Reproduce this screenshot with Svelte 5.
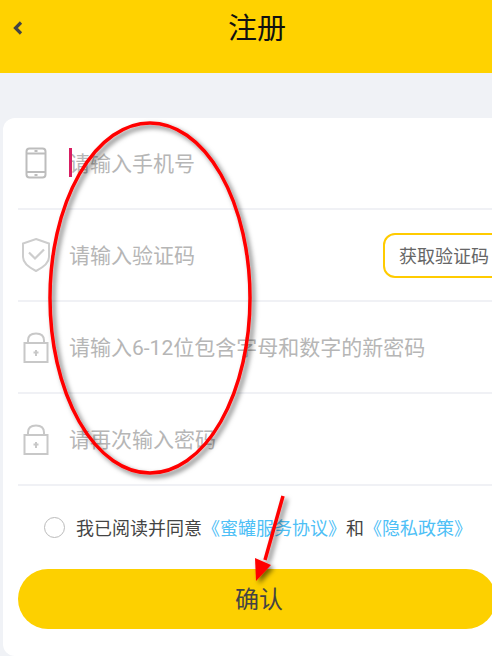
<script>
  const rows = [
    { icon: "phone", hint: "请输入手机号", caret: true },
    { icon: "shield", hint: "请输入验证码", code: true },
    { icon: "lock", hint: "请输入6-12位包含字母和数字的新密码" },
    { icon: "lock", hint: "请再次输入密码" },
  ];
</script>

<div class="page">
  <header class="bar">
    <svg class="back" width="12" height="16" viewBox="0 0 12 16">
      <path d="M9 2.5 L3.5 8 L9 13.5" fill="none" stroke="#444" stroke-width="3.2" />
    </svg>
    <h1>注册</h1>
  </header>

  <main class="card">
    {#each rows as row}
      <div class="row">
        <div class="icon">
          {#if row.icon == "phone"}
            <svg width="22" height="32" viewBox="0 0 22 32" fill="none" stroke="#bdbdbd" stroke-width="2">
              <rect x="1.500" y="1.500" width="19" height="29" rx="3" />
              <path d="M1.500 6.500 H20.500 M1.500 25 H20.500 M9.500 4 H12.500" />
              <path d="M9.500 28 H12.500" />
            </svg>
          {:else if row.icon == "shield"}
            <svg width="30" height="36" viewBox="0 0 30 36" fill="none" stroke="#cdcdcd" stroke-width="2">
              <path d="M15 2 L28 6.5 V20 C28 26 21 31 15 34 C9 31 2 26 2 20 V6.5 Z" />
              <path d="M8 15.5 L14 21.5 L23 12.5" stroke-width="2.2" />
            </svg>
          {:else}
            <svg class="lock" width="26" height="31" viewBox="0 0 26 31" fill="none" stroke="#c8c8c8" stroke-width="2">
              <rect x="1.500" y="11" width="23" height="19" />
              <path d="M5 11 V8.500 C5 3.500 8.500 1.500 13 1.500 C17.500 1.500 21 3.500 21 8.500 V11" />
              <path d="M13 18 V24 M10.500 20.500 H15.500" />
            </svg>
          {/if}
        </div>
        <div class="field">
          {#if row.caret}<span class="caret"></span>{/if}
          <span class="hint">{row.hint}</span>
        </div>
        {#if row.code}<button class="code">获取验证码</button>{/if}
      </div>
    {/each}

    <div class="agree">
      <span class="radio"></span>
      <span>我已阅读并同意<a href="#a">《蜜罐服务协议》</a>和<a href="#b">《隐私政策》</a></span>
    </div>

    <button class="submit">确认</button>
  </main>

  <svg class="marks" width="492" height="656" viewBox="0 0 492 656">
    <defs>
      <filter id="shade" x="-10%" y="-10%" width="125%" height="125%">
        <feDropShadow dx="3" dy="3" stdDeviation="2.500" flood-color="#000" flood-opacity="0.55" />
      </filter>
    </defs>
    <g filter="url(#shade)">
      <ellipse cx="150" cy="298" rx="100" ry="175" fill="none" stroke="#ff0000" stroke-width="3.500" />
      <path d="M283 496 L265 560" fill="none" stroke="#ff0000" stroke-width="3.500" />
      <path d="M256 581 L255 558 L271 565 Z" fill="#ff0000" />
    </g>
  </svg>
</div>

<style>
  :global(body) {
    margin: 0;
    overflow: hidden;
  }

  .page {
    position: relative;
    width: 492px;
    height: 656px;
    overflow: hidden;
    background: #f0f2f6;
    font-family: "Roboto", "Noto Sans CJK SC", sans-serif;
  }

  .bar {
    position: relative;
    height: 73px;
    background: #ffd200;
    display: flex;
    justify-content: center;
  }

  .bar h1 {
    margin: 9px 0 0 22px;
    font-size: 29px;
    line-height: 40px;
    font-weight: 400;
    color: #111;
  }

  .back {
    position: absolute;
    left: 12px;
    top: 20px;
  }

  .card {
    margin: 45px 0 0 3px;
    width: 520px;
    height: 538px;
    padding-left: 15px;
    box-sizing: border-box;
    background: #fff;
    border-radius: 12px;
  }

  .row {
    height: 90px;
    width: 480px;
    border-bottom: 2px solid #f0f1f5;
    display: flex;
    align-items: center;
  }

  .icon {
    width: 36px;
    flex: none;
    display: flex;
    justify-content: center;
    margin-right: 15px;
  }

  .icon svg {
    display: block;
  }

  .icon .lock {
    margin-right: 1px;
  }

  .field {
    position: relative;
    flex: 1;
    height: 30px;
    box-sizing: border-box;
    padding-top: 2px;
    display: flex;
    align-items: center;
  }

  .hint {
    font-size: 21px;
    line-height: 28px;
    color: #b6b6b6;
    white-space: nowrap;
  }

  .caret {
    position: absolute;
    left: 0;
    top: 0;
    width: 3px;
    height: 29px;
    background: #d81e62;
  }

  .code {
    flex: none;
    width: 130px;
    height: 45px;
    margin-right: -15px;
    padding: 0 0 0 14px;
    border: 2px solid #ffcb00;
    border-radius: 12px;
    background: #fff;
    color: #666;
    font: inherit;
    font-size: 18px;
    text-align: left;
  }

  .agree {
    height: 84px;
    margin-top: -1px;
    display: flex;
    align-items: center;
    padding-left: 26px;
    font-size: 18px;
    color: #444;
    white-space: nowrap;
  }

  .agree a {
    color: #4ec0f6;
    text-decoration: none;
  }

  .radio {
    width: 19px;
    height: 19px;
    flex: none;
    margin-right: 11px;
    border: 1px solid #bbb;
    border-radius: 50%;
  }

  .submit {
    display: block;
    width: 478px;
    height: 60px;
    border: 0;
    padding: 0 0 4px 217px;
    border-radius: 30px;
    background: #fdd000;
    color: #444;
    font: inherit;
    font-size: 24px;
    text-align: left;
  }

  .marks {
    position: absolute;
    left: 0;
    top: 0;
    pointer-events: none;
  }
</style>
